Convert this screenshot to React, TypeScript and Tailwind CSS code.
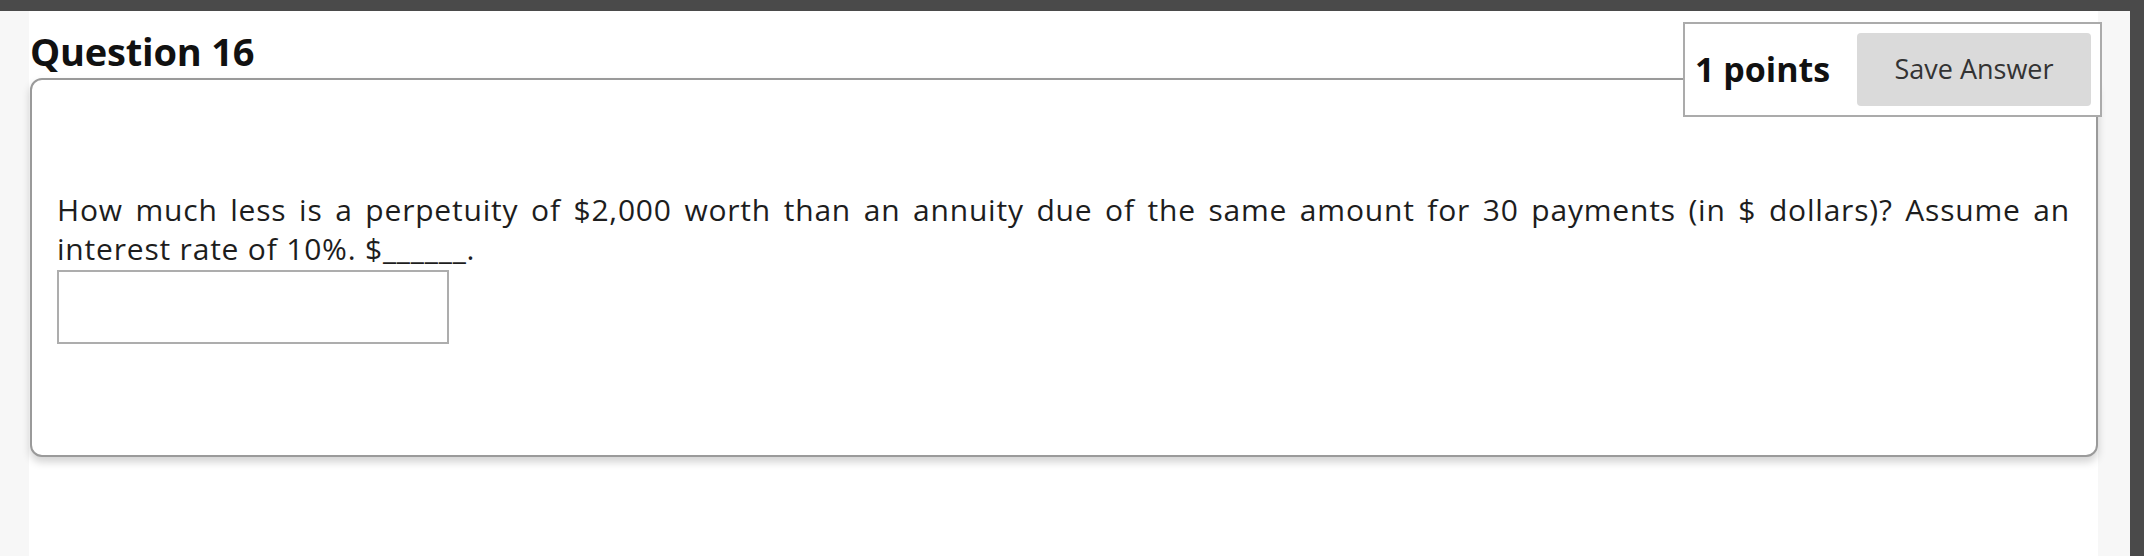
import React from "react";

export default function App() {
  return (
    <div
      className="w-[2144px] h-[556px] bg-[#4a4a4a] pt-[11px] pr-[14px] flex overflow-hidden"
      style={{ fontFamily: '"Open Sans", "Noto Sans", sans-serif' }}
    >
      <div className="w-[29px] bg-[#f7f7f7]" />
      <div className="w-[2069px] bg-white relative">
        <h1 className="pl-[1px] pt-[14px] text-[38px] leading-[52px] font-bold text-[#111] tracking-[-0.2px]">
          Question 16
        </h1>
        <div className="mt-[1px] ml-[1px] w-[2068px] h-[379px] border-2 border-[#9a9a9a] rounded-[12px] shadow-[0_5px_8px_rgba(0,0,0,0.18)] bg-white pl-[25px] pr-[26px] pt-[110px]">
          <p className="text-[30px] leading-[39px] tracking-[0.8px] text-[#1d1d1d] text-justify">
            How much less is a perpetuity of $2,000 worth than an annuity due of the same amount for 30 payments (in $ dollars)? Assume an interest rate of 10%. $______.
          </p>
          <div className="mt-[2px] w-[392px] h-[74px] border-2 border-[#adadad] bg-white" />
        </div>
        <div className="absolute left-[1654px] top-[11px] w-[419px] h-[95px] border-2 border-[#ababab] bg-white flex items-center justify-between pl-[10px] pr-[9px]">
          <span className="text-[34px] font-bold text-[#111]">1 points</span>
          <button className="w-[234px] h-[73px] rounded-[4px] bg-[#dadada] text-[27px] text-[#333]">
            Save Answer
          </button>
        </div>
      </div>
      <div className="w-[32px] bg-[#f7f7f7]" />
    </div>
  );
}
